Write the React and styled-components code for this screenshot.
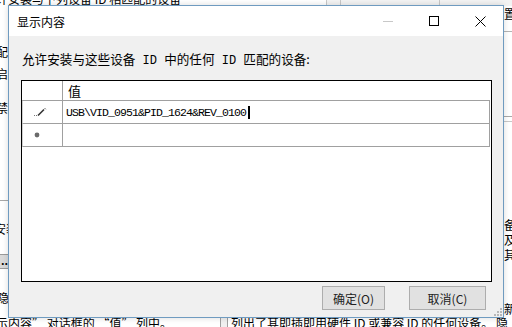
import React from "react";
import styled, { createGlobalStyle } from "styled-components";

const GlobalStyle = createGlobalStyle`
  html, body {
    margin: 0;
    padding: 0;
    overflow: hidden;
    background: #ffffff;
  }
`;

const cjk = `"Noto Sans CJK SC", "Liberation Sans", sans-serif`;

const Screen = styled.div`
  position: relative;
  width: 512px;
  height: 327px;
  overflow: hidden;
  background: #ffffff;
  font-family: ${cjk};
  color: #000;
`;

/* ---------- background window (mostly hidden) ---------- */

const Backdrop = styled.div`
  display: flex;
  flex-direction: column;
  width: 512px;
  height: 327px;
`;

const TopStrip = styled.div`
  height: 6px;
  overflow: hidden;
  display: flex;
`;

const TopText = styled.div`
  font-size: 12px;
  line-height: 12px;
  margin-top: -7px;
  margin-left: -4px;
  width: 330px;
  white-space: nowrap;
`;

const TopHeader = styled.div`
  flex: 1;
  background: #f3f3f3;
  border-left: 1px solid #c8c8c8;
  display: flex;
  justify-content: flex-end;
`;

const HeadCell = styled.div`
  width: ${(p) => p.$w}px;
  border-left: 1px solid #c8c8c8;
`;

const Middle = styled.div`
  flex: 1;
  display: flex;
  justify-content: space-between;
`;

const LeftPane = styled.div`
  width: 100px;
  display: flex;
  flex-direction: column;
  font-size: 12px;
  line-height: 12px;
  white-space: nowrap;
`;

const PaneText = styled.div`
  margin-top: ${(p) => p.$top}px;
  margin-left: ${(p) => p.$left || -4}px;
`;

const PaneRule = styled.div`
  margin-top: ${(p) => p.$top}px;
  height: 1px;
  background: #a8a8a8;
`;

const BrowseBar = styled.div`
  margin-top: 19px;
  height: 13px;
  background: #d9d9d9;
  border-top: 1px solid #9a9a9a;
  border-bottom: 1px solid #9a9a9a;
  font-size: 11px;
  line-height: 10px;
  font-weight: bold;
  padding-left: 1px;
`;

const RightPane = styled.div`
  width: 40px;
  display: flex;
  flex-direction: column;
  font-size: 12px;
  line-height: 15px;
  white-space: nowrap;
`;

const RightHeader = styled.div`
  height: 26px;
  padding-left: 20px;
  padding-top: 1px;
  box-sizing: border-box;
  border-bottom: 1px solid #b4b4b4;
  line-height: 14px;
`;

const DoubleRule = styled.div`
  margin-top: ${(p) => p.$top}px;
  height: 4px;
  border-top: 1px solid #a8a8a8;
  border-bottom: 1px solid #c8c8c8;
`;

const RightText = styled.div`
  margin-top: ${(p) => p.$top}px;
  padding-left: 32px;
`;

const BottomStrip = styled.div`
  height: 10px;
  display: flex;
  font-size: 12px;
  line-height: 12px;
  white-space: nowrap;
  overflow: hidden;
`;

const BottomLeft = styled.div`
  width: 224px;
  margin-left: -4px;
`;

const TinyBox = styled.div`
  width: 6px;
  height: 10px;
  border: 1px solid #a0a0a0;
  border-bottom: none;
  background: #f0f0f0;
  margin-right: 3px;
`;

/* ---------- dialog ---------- */

const Dialog = styled.div`
  position: absolute;
  left: 8px;
  top: 5px;
  width: 494px;
  height: 311px;
  border: 1px solid #6f9bc0;
  background: #f0f0f0;
  display: flex;
  flex-direction: column;
  box-shadow: 0 0 6px rgba(0, 0, 0, 0.15);
`;

const TitleBar = styled.div`
  height: 30px;
  background: #ffffff;
  display: flex;
  align-items: center;
`;

const Title = styled.div`
  flex: 1;
  padding-left: 8px;
  padding-top: 2px;
  font-size: 12px;
  line-height: 14px;
`;

const CaptionButton = styled.div`
  width: 46px;
  height: 30px;
  display: flex;
  align-items: center;
  justify-content: center;
`;

const Body = styled.div`
  flex: 1;
  display: flex;
  flex-direction: column;
  padding: 16px 11px 0 12px;
`;

const Prompt = styled.div`
  font-size: 12.6px;
  line-height: 14px;
  padding-left: 1px;
  white-space: nowrap;
`;

const Mono = styled.span`
  font-family: "Liberation Mono", monospace;
  font-size: 12px;
`;

const Table = styled.div`
  margin-top: 12px;
  height: 200px;
  border: 1px solid #000;
  background: #ffffff;
  display: flex;
  flex-direction: column;
`;

const Row = styled.div`
  display: grid;
  grid-template-columns: 41px 427px;
  height: ${(p) => p.$h}px;
`;

const RowHead = styled.div`
  border-right: 1px solid #a0a0a0;
  border-bottom: 1px solid #a0a0a0;
  border-left: ${(p) => (p.$edge ? "1px solid #d0d0d0" : "none")};
  display: flex;
  align-items: center;
  padding-left: 10px;
`;

const Cell = styled.div`
  border-right: ${(p) => (p.$edge ? "1px solid #a0a0a0" : "none")};
  border-bottom: 1px solid #a0a0a0;
  display: flex;
  align-items: center;
  padding-left: ${(p) => p.$pad}px;
  font-size: 13px;
  white-space: nowrap;
`;

const DeviceId = styled.span`
  font-family: "Liberation Mono", monospace;
  font-size: 11.5px;
  letter-spacing: -0.9px;
`;

const Caret = styled.span`
  display: inline-block;
  width: 2px;
  height: 13px;
  background: #000;
  margin-left: 2px;
`;

const Footer = styled.div`
  height: 36px;
  display: flex;
  justify-content: flex-end;
  align-items: flex-start;
  padding: 4px 17px 0 0;
  gap: 24px;
  position: relative;
`;

const Button = styled.div`
  width: ${(p) => p.$w}px;
  height: 22px;
  border: 1px solid #adadad;
  background: #e1e1e1;
  display: flex;
  align-items: center;
  justify-content: center;
  font-size: 12px;
  color: #222;
`;

const Grip = styled.svg`
  position: absolute;
  right: 1px;
  bottom: 1px;
`;

const Pencil = () => (
  <svg width="14" height="10" viewBox="0 0 14 10">
    <rect x="1" y="8" width="1" height="1" fill="#777" />
    <rect x="3" y="8" width="1" height="1" fill="#777" />
    <path d="M5 8.5 L11 2.5" stroke="#333" strokeWidth="1.6" />
    <path d="M11.5 1 L12.8 2.3" stroke="#666" strokeWidth="1" />
  </svg>
);

const NewRowDot = () => (
  <svg width="8" height="8" viewBox="0 0 8 8">
    <circle cx="4" cy="4" r="2.4" fill="#6b6b6b" />
  </svg>
);

export default function App() {
  return (
    <>
      <GlobalStyle />
      <Screen>
        <Backdrop>
          <TopStrip>
            <TopText>许安装与下列设备 ID 相匹配的设备</TopText>
            <TopHeader>
              <HeadCell $w={98} />
              <HeadCell $w={72} />
            </TopHeader>
          </TopStrip>
          <Middle>
            <LeftPane>
              <PaneText $top={40}>配置</PaneText>
              <PaneText $top={10}>启用</PaneText>
              <PaneText $top={22}>禁用</PaneText>
              <PaneRule $top={86} />
              <PaneText $top={22} $left={-6}>安装</PaneText>
              <BrowseBar>...</BrowseBar>
              <PaneText $top={23} $left={-3}>隐藏</PaneText>
            </LeftPane>
            <RightPane>
              <RightHeader>设置</RightHeader>
              <DoubleRule $top={84} />
              <RightText $top={95}>备</RightText>
              <RightText $top={0}>及</RightText>
              <RightText $top={0}>其</RightText>
              <RightText $top={39}>新</RightText>
            </RightPane>
          </Middle>
          <BottomStrip>
            <BottomLeft>示内容” 对话框的 “值” 列中。</BottomLeft>
            <TinyBox />
            <span>列出了其即插即用硬件 ID 或兼容 ID 的任何设备。 隐</span>
          </BottomStrip>
        </Backdrop>

        <Dialog>
          <TitleBar>
            <Title>显示内容</Title>
            <CaptionButton>
              <svg width="10" height="10" viewBox="0 0 10 10">
                <path d="M0 5.5 H10" stroke="#c8c8c8" strokeWidth="1" />
              </svg>
            </CaptionButton>
            <CaptionButton>
              <svg width="10" height="10" viewBox="0 0 10 10">
                <rect x="0.5" y="0.5" width="9" height="9" fill="none" stroke="#000" strokeWidth="1" />
              </svg>
            </CaptionButton>
            <CaptionButton>
              <svg width="11" height="11" viewBox="0 0 11 11">
                <path d="M0.5 0.5 L10.5 10.5 M10.5 0.5 L0.5 10.5" stroke="#000" strokeWidth="1" />
              </svg>
            </CaptionButton>
          </TitleBar>

          <Body>
            <Prompt>
              允许安装与这些设备<Mono> ID </Mono>中的任何<Mono> ID </Mono>匹配的设备:
            </Prompt>
            <Table>
              <Row $h={20}>
                <RowHead />
                <Cell $pad={5}>值</Cell>
              </Row>
              <Row $h={23}>
                <RowHead $edge>
                  <Pencil />
                </RowHead>
                <Cell $edge $pad={3}>
                  <DeviceId>USB\VID_0951&amp;PID_1624&amp;REV_0100</DeviceId>
                  <Caret />
                </Cell>
              </Row>
              <Row $h={23}>
                <RowHead $edge>
                  <NewRowDot />
                </RowHead>
                <Cell $edge $pad={3} />
              </Row>
            </Table>
          </Body>

          <Footer>
            <Button $w={61}>确定(O)</Button>
            <Button $w={75}>取消(C)</Button>
            <Grip width="8" height="8" viewBox="0 0 8 8">
              <rect x="6" y="0" width="2" height="2" fill="#b8b8b8" />
              <rect x="3" y="3" width="2" height="2" fill="#b8b8b8" />
              <rect x="6" y="3" width="2" height="2" fill="#b8b8b8" />
              <rect x="0" y="6" width="2" height="2" fill="#b8b8b8" />
              <rect x="3" y="6" width="2" height="2" fill="#b8b8b8" />
              <rect x="6" y="6" width="2" height="2" fill="#b8b8b8" />
            </Grip>
          </Footer>
        </Dialog>
      </Screen>
    </>
  );
}
